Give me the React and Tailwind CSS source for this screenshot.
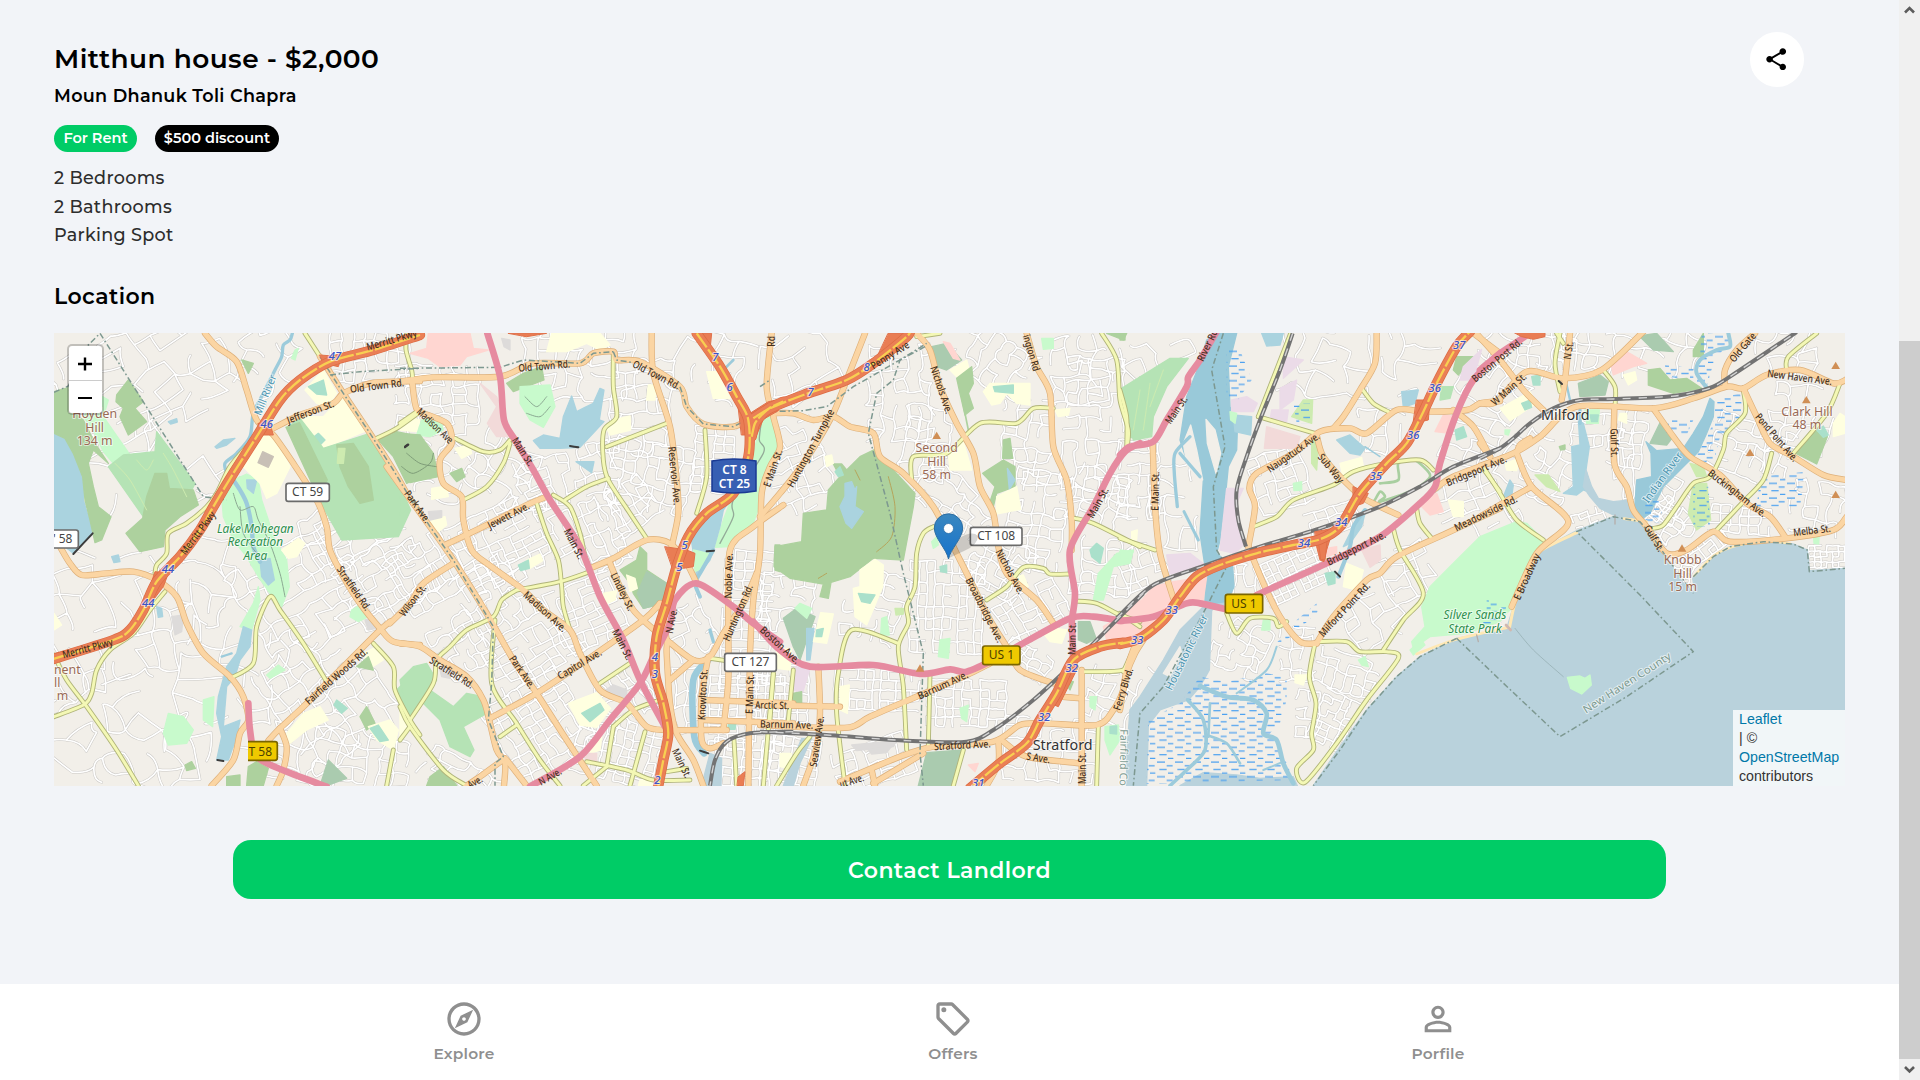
import React from "react";
import { MdShare, MdOutlineExplore, MdOutlineLocalOffer } from "react-icons/md";

/* ---------- Map helpers ---------- */

const parse = (s) => s.trim().split(/\s+/).map((p) => p.split(",").map(Number));

// Catmull-Rom spline through the points of a road.
function curve(s) {
  const p = parse(s);
  let d = `M${p[0]}`;
  for (let i = 0; i < p.length - 1; i++) {
    const a = p[i - 1] || p[i];
    const b = p[i];
    const c = p[i + 1];
    const e = p[i + 2] || c;
    d += `C${b[0] + (c[0] - a[0]) / 7},${b[1] + (c[1] - a[1]) / 7} ${c[0] - (e[0] - b[0]) / 7},${c[1] - (e[1] - b[1]) / 7} ${c}`;
  }
  return d;
}

// Irregular street lattice: [cx, cy, width, height, angle, spacingX, spacingY, irregularity]
function lattice([cx, cy, w, h, ang, spx, spy, jit]) {
  const sx = spx * 0.82;
  const sy = spy * 0.82;
  let seed = Math.round(cx * 7 + cy * 13 + w) || 1;
  const rnd = () => {
    seed = (seed * 16807) % 2147483647;
    return seed / 2147483647;
  };
  rnd();
  const nx = Math.round(w / sx);
  const ny = Math.round(h / sy);
  const a = (ang * Math.PI) / 180;
  const pts = [];
  for (let j = 0; j <= ny; j++) {
    const row = [];
    for (let i = 0; i <= nx; i++) {
      const x = (i - nx / 2) * sx + (rnd() - 0.5) * jit * sx;
      const y = (j - ny / 2) * sy + (rnd() - 0.5) * jit * sy;
      row.push([
        Math.round(cx + x * Math.cos(a) - y * Math.sin(a)),
        Math.round(cy + x * Math.sin(a) + y * Math.cos(a)),
      ]);
    }
    pts.push(row);
  }
  const skip = 0.1 + jit * 0.55;
  let d = "";
  for (let j = 0; j <= ny; j++)
    for (let i = 0; i <= nx; i++) {
      const p = pts[j][i];
      if (i < nx && rnd() > skip) {
        const q = pts[j][i + 1];
        const b = (rnd() - 0.5) * jit * 50;
        d += `M${p}Q${(p[0] + q[0]) / 2 + b},${(p[1] + q[1]) / 2 - b} ${q}`;
      }
      if (j < ny && rnd() > skip) {
        const q = pts[j + 1][i];
        const b = (rnd() - 0.5) * jit * 50;
        d += `M${p}Q${(p[0] + q[0]) / 2 + b},${(p[1] + q[1]) / 2 + b} ${q}`;
      }
    }
  return d;
}

const FILL = {
  wood: "#add19e",
  golf: "#b5e3b5",
  park: "#c8facc",
  school: "#ffffe0",
  cem: "#aacbaf",
  retail: "#ffd6d1",
  com: "#f2dad9",
  ind: "#ebdbe8",
  water: "#aad3df",
  river: "#99c9d9",
  sea: "#b9d2dc",
  land: "#f2efe9",
  meadow: "#cdebb0",
  grey: "#dddbda",
  pitch: "#aae0cb",
  building: "#c8c0b6",
};

/* Map sections, each drawn in its own coordinates at three units per pixel. */
const SECTIONS = [
  {
    x: 40,
    grids: [
      [280, 180, 560, 300, -25, 70, 60, 0.6], [420, 420, 260, 260, -30, 80, 70, 0.7], [240, 900, 420, 320, -15, 75, 70, 0.7],
      [230, 1260, 420, 320, 60, 75, 70, 0.7], [790, 820, 330, 380, 60, 48, 55, 0.35], [930, 640, 220, 260, 62, 50, 45, 0.4],
      [860, 1130, 360, 300, 55, 55, 48, 0.4], [990, 110, 220, 160, 0, 40, 36, 0.35], [1040, 780, 200, 260, 58, 42, 40, 0.3],
      [560, 1120, 280, 420, 10, 70, 70, 0.7], [680, 120, 220, 180, 40, 60, 60, 0.7], [900, 1320, 420, 180, 10, 50, 42, 0.4],
      [120, 560, 160, 260, 20, 90, 80, 0.8], [500, 780, 200, 250, 20, 70, 60, 0.7],
    ],
    areas: [
      ["water", "42,340 75,355 100,400 130,480 130,540 160,640 100,700 75,680 42,640"],
      ["wood", "42,215 84,203 84,280 110,285 130,300 165,370 205,430 160,390 145,430 160,500 175,560 213,590 185,660 165,668 150,600 135,540 128,470 100,400 75,355 42,340"],
      ["wood", "230,225 265,180 310,245 285,265 320,305 265,345 240,290 250,265 228,245"],
      ["park", "130,290 180,225 205,240 190,290 270,405 220,430 190,395 160,330"],
      ["golf", "205,440 250,405 345,395 350,335 465,490 450,520 410,580 310,590"],
      ["wood", "345,460 380,460 388,505 460,510 475,555 420,590 375,630 370,680 300,695 258,640 308,595 320,530"],
      ["wood", "605,120 640,130 625,160"],
      ["park", "775,85 765,120 755,115 765,90"],
      ["park", "545,530 580,480 620,462 655,480 665,540 685,600 700,650 740,720 748,800 725,860 690,820 655,770 620,710 580,660 550,590"],
      ["water", "660,720 690,715 703,780 685,795 665,770"],
      ["water", "620,480 650,480 640,520 622,505"],
      ["park", "655,800 660,840 635,930 600,920 640,850"],
      ["water", "610,920 635,930 630,980 600,1020 585,1070 560,1100 555,1160 550,1220 600,1200 590,1250 565,1320 530,1320 545,1250 530,1180 535,1130 560,1040 590,1000"],
      ["water", "525,380 550,360 585,355 560,375 530,385"],
      ["water", "215,710 235,705 240,725 222,728"],
      ["water", "350,860 365,865 368,890 355,892"],
      ["water", "385,305 410,296 412,306 392,312"],
      ["school", "675,340 700,350 750,440 710,520 680,535 660,490 610,440"],
      ["building", "668,395 700,410 685,442 654,428"],
      ["school", "780,290 850,290 910,225 985,330 850,385"],
      ["school", "795,210 850,150 890,220 860,260 830,250"],
      ["pitch", "805,200 850,180 860,225 830,222"],
      ["pitch", "835,340 855,360 840,375 822,350"],
      ["golf", "745,320 780,295 850,385 990,340 1060,455 1112,570 1075,650 905,660 860,580 830,520"],
      ["wood", "738,322 778,308 862,480 830,522"],
      ["wood", "890,375 940,370 985,440 1000,540 960,550 925,500 900,440"],
      ["wood", "1015,360 1070,335 1140,350 1140,470 1100,490 1060,410"],
      ["meadow", "895,385 915,385 910,430 892,430"],
      ["school", "725,690 775,655 795,670 770,710 745,715"],
      ["grey", "395,890 430,885 425,935 405,945"],
      ["park", "370,1240 385,1180 430,1190 460,1230 440,1270 385,1275"],
      ["park", "490,1140 522,1130 518,1220 490,1200"],
      ["wood", "435,1335 455,1325 466,1345 440,1352"],
      ["wood", "625,1340 650,1325 685,1345 670,1397 620,1397"],
      ["wood", "560,1370 600,1365 600,1397 560,1397"],
      ["park", "680,1065 715,1035 735,1050 690,1075"],
      ["park", "935,870 960,855 985,890 955,905 930,890"],
      ["school", "970,1000 1010,980 1030,1020 990,1045"],
      ["wood", "950,1040 985,1010 1000,1050"],
      ["school", "740,1240 790,1180 840,1160 865,1200 800,1230 750,1270"],
      ["pitch", "890,1140 922,1165 905,1180 882,1155"],
      ["cem", "865,1320 920,1375 860,1397 840,1397"],
      ["wood", "960,1190 980,1160 1005,1210 980,1230"],
      ["school", "985,1220 1050,1200 1075,1230 1060,1290 1010,1260"],
      ["pitch", "990,1225 1015,1215 1045,1260 1020,1265"],
      ["school", "42,880 65,915 42,930"],
      ["golf", "1070,1110 1140,1040 1140,1120 1110,1190"],
      ["grey", "975,900 1005,895 1010,925 985,930"],
    ],
    streams: [
      ["757,40 750,60 730,75 725,110 705,150 670,220 640,280 630,350 590,400 555,430 560,460", 10],
      ["580,480 600,510 620,550 635,620 640,680 660,725", 13],
      ["545,1010 575,1000", 7],
      ["225,430 270,480 320,570", 3, "#cdebb0"], ["290,420 320,450 340,420", 3, "#cdebb0"], ["370,400 400,450 440,530", 3, "#cdebb0"],
      ["580,520 600,570 640,560 655,600 690,670 720,760 735,830", 3, "#8ba892"], ["600,560 610,640 650,700", 3, "#8ba892"],
    ],
    tertiary: [
      "42,1190 130,1155 155,1120 170,1050 210,990 280,940 330,870 375,815",
      "42,1005 80,1080 140,1160 230,1290 295,1397",
      "345,760 350,735 380,700 385,640 440,610 500,560 530,520 570,440 620,380",
      "570,1075 640,1030 650,920 690,830 720,870 790,970 860,1085",
      "1000,970 1060,1040 1065,1110 1110,1200 1140,1245",
      "1010,355 1070,325 1140,275", "795,40 840,110",
      "1060,1290 1040,1397",
    ],
    secondary: [
      "495,40 530,80 590,125 620,210 650,300 700,345 760,430 830,540 860,620 870,690 910,770 960,850 1020,925 1060,965 1140,975",
      "690,330 780,285 880,250 910,220 990,190 1060,185 1140,183",
      "60,680 90,730 125,765 200,760 280,755 350,780 410,830 440,910 490,1000 570,1070 610,1130 625,1200 600,1240 580,1320 515,1397",
      "1050,905 1020,930 960,990 860,1090 790,1160 720,1225 685,1262",
      "720,1225 740,1280 730,1350 710,1397",
      "840,110 910,220 990,340 1060,450 1100,520",
    ],
    primary: ["625,1150 630,1230 650,1310 740,1355 860,1400"],
    motorway: ["30,1020 220,960 270,930 310,870 350,785 420,710 480,630 520,560 580,460 650,350 720,240 780,180 870,125 1000,90 1140,45"],
    junctions: ["335,785 345,755 385,760 370,800 340,840 325,810", "840,105 905,110 895,140 850,130", "655,310 690,310 700,345 660,345"],
    rail: [],
    borders: [
      "42,217 85,198 140,80 180,40 300,230 490,530 560,540",
      "840,110 910,220 990,340 1060,450 1120,550",
      "870,165 960,155 1140,145",
    ],
    blocks: ["100,702 158,640", "532,1320 550,1323", "1095,380 1103,374"],
    labels: [
      ["Merritt Pkwy", 68, 1005, 218, 965], ["Merritt Pkwy", 428, 700, 520, 578], ["Merritt Pkwy", 980, 82, 1130, 38],
      ["Jefferson St.", 742, 302, 880, 250], ["Old Town Rd.", 930, 208, 1092, 188], ["Stratfield Rd.", 898, 742, 985, 868],
      ["Fairfield Woods Rd.", 800, 1148, 978, 990],
    ],
    texts: [
      ["Hoyden", 164, 282, "hill"], ["Hill", 164, 322, "hill"], ["134 m", 164, 362, "hill"],
      ["nent", 42, 1048, "hill", "start"], ["ll", 42, 1087, "hill", "start"], ["m", 50, 1128, "hill", "start"],
      ["Lake Mohegan", 646, 626, "park"], ["Recreation", 646, 667, "park"], ["Area", 646, 707, "park"],
      ["47", 885, 108, "exit"], ["46", 680, 311, "exit"], ["44", 384, 747, "exit"], ["44", 325, 848, "exit"],
    ],
    waterLabels: [["Mill River", 652, 285, 700, 165]],
    shields: [["CT 59", 738, 490, 130, 54, "ct"], ["' 58", 0, 630, 115, 54, "ct"]],
    peaks: [],
  },
  {
    x: 400,
    grids: [
      [110, 240, 240, 200, 0, 42, 36, 0.4], [540, 130, 320, 200, 0, 50, 44, 0.5], [720, 260, 180, 280, 5, 42, 50, 0.4],
      [500, 470, 300, 140, -15, 40, 36, 0.4], [750, 470, 240, 200, 12, 42, 40, 0.35], [930, 140, 200, 220, 20, 60, 60, 0.7],
      [940, 420, 110, 200, 5, 36, 30, 0.25], [330, 660, 340, 230, -25, 40, 30, 0.25], [290, 830, 220, 200, 58, 44, 36, 0.3],
      [600, 640, 200, 160, 65, 42, 34, 0.3], [560, 880, 220, 200, -22, 42, 30, 0.25], [400, 1000, 260, 150, -30, 42, 34, 0.25],
      [180, 980, 180, 160, 58, 40, 36, 0.3], [420, 1220, 260, 260, 58, 36, 40, 0.2], [650, 1290, 260, 180, 15, 34, 32, 0.2],
      [680, 1130, 140, 150, 55, 36, 34, 0.3], [1040, 900, 160, 420, 3, 36, 36, 0.2], [1040, 1180, 220, 220, 1, 34, 30, 0.15],
      [1040, 1330, 200, 150, 4, 34, 34, 0.2], [860, 1140, 90, 220, 0, 44, 50, 0.5], [80, 760, 180, 200, 58, 46, 40, 0.3],
      [110, 440, 180, 170, 20, 50, 46, 0.5], [310, 450, 200, 200, 30, 55, 55, 0.6], [180, 1370, 240, 100, 30, 48, 40, 0.4],
      [870, 930, 150, 130, 60, 46, 40, 0.4], [690, 560, 130, 160, 55, 40, 36, 0.3],
    ],
    areas: [
      ["retail", "85,40 210,40 220,85 265,90 200,110 180,135 120,140 85,115 30,100 80,85"],
      ["com", "240,190 290,230 340,350 290,350 262,310 290,260"],
      ["wood", "320,190 370,160 425,140 432,180 340,215"],
      ["park", "360,200 450,195 465,260 430,322 390,300 360,250"],
      ["water", "400,362 430,345 480,355 490,290 515,228 530,275 555,262 580,250 600,205 612,210 598,300 612,305 570,350 540,382 480,385 420,385"],
      ["water", "528,425 582,425 575,458"],
      ["school", "455,40 600,40 630,75 600,90 560,70 500,95 440,95"],
      ["school", "640,300 690,288 692,330 630,345 622,330"],
      ["school", "745,195 768,195 765,240 740,240"],
      ["school", "920,155 950,155 990,235 940,235"],
      ["school", "20,290 60,300 50,335 0,330"],
      ["park", "65,300 120,290 130,330 90,350 50,345"],
      ["pitch", "25,350 60,345 55,370 25,375"],
      ["wood", "0,340 60,345 100,400 115,470 30,488 0,430"],
      ["wood", "150,460 185,445 195,470 170,485"],
      ["school", "95,505 140,498 145,530 95,538"],
      ["school", "80,600 135,590 140,615 115,635"],
      ["golf", "0,520 25,560 0,585"],
      ["school", "165,385 210,375 215,400 185,415"],
      ["park", "1108,290 1140,350 1090,520 1060,610 990,680 945,682 970,600 1000,520 1060,400 1080,320"],
      ["water", "995,535 970,570 960,620 940,690 930,720 890,770 875,665 910,600"],
      ["park", "880,690 925,700 915,740 885,755"],
      ["wood", "660,750 710,720 720,680 740,700 740,750 800,790 790,850 730,865 700,820 690,790"],
      ["cem", "740,755 800,790 790,850 730,865 712,820"],
      ["school", "680,765 705,775 712,805 690,815"],
      ["school", "610,820 650,812 645,840 612,855"],
      ["school", "380,720 420,702 428,722 390,745"],
      ["pitch", "355,735 385,720 388,745 362,752"],
      ["golf", "0,1080 40,1040 80,1030 110,1080 90,1110 160,1160 200,1120 250,1130 260,1180 190,1220 222,1290 210,1310 150,1280 120,1200 70,1150 20,1190"],
      ["school", "505,1150 590,1118 632,1165 590,1222 540,1215"],
      ["pitch", "545,1180 600,1150 612,1170 570,1205"],
      ["school", "0,1170 25,1215 0,1260"],
      ["wood", "90,1370 130,1340 170,1397 80,1397"],
      ["grey", "600,1120 640,1095 680,1110 680,1150 650,1140"],
      ["grey", "120,1050 150,1040 150,1075 125,1070"],
      ["grey", "305,55 330,60 330,90 312,80"],
      ["grey", "85,575 125,572 125,592 90,600"],
      ["school", "580,1260 605,1250 600,1290 570,1300"],
      ["com", "560,1300 590,1300 590,1325 555,1320"],
      ["sea", "930,1300 965,1315 963,1397 905,1397"],
      ["wood", "1125,675 1140,675 1140,755 1125,750"],
      ["pitch", "985,1212 1008,1212 1005,1228 983,1228"],
      ["school", "720,1380 760,1385 755,1397 715,1397"],
    ],
    streams: [
      ["925,1020 880,1080 883,1250 912,1300", 20],
      ["940,690 900,760 885,790 900,830", 12], ["1000,120 975,145", 8], ["930,930 940,965", 10],
      ["375,230 410,260 440,230", 3, "#8ba892"], ["380,280 420,290 450,260", 3, "#8ba892"],
      ["5,440 40,460 90,430 100,400", 3, "#7d9c77"], ["20,400 60,430 110,440", 3, "#7d9c77"],
      ["1085,300 1078,360 1090,400 1000,540 1000,590 960,670", 4, "#93ab98"],
    ],
    tertiary: [
      "20,40 18,90 35,150 38,180", "640,100 640,200 650,290 612,330 610,420 625,480 690,580 740,655", "620,380 800,310",
      "495,540 560,500 625,475", "460,525 510,560 540,640 555,710", "410,550 440,640 475,720 485,800 490,860 510,930",
      "350,810 480,785 570,755", "350,810 305,840 280,890 200,930 150,980 110,1020 100,1090 30,1200",
      "165,355 250,395 300,390 330,360", "330,370 310,430 260,500 190,540", "915,330 920,470 890,580",
      "285,900 275,1090 350,1210 420,1320 480,1397", "0,1160 30,1220 130,1350 200,1397", "300,1250 350,1215",
      "600,1090 690,1030", "560,1325 680,1350 760,1380 870,1380", "735,1235 690,1397", "640,1220 620,1340",
      "780,1140 700,1170 640,1220", "550,1397 620,1340", "1002,1260 1010,1397", "1120,1060 1090,1397",
      "930,1015 1000,1025", "0,310 50,275", "30,1220 0,1260", "800,1355 860,1345",
    ],
    secondary: [
      "0,185 100,172 300,170 400,130 540,130 580,100 640,95 650,120 720,125 840,200 860,260 910,312 1000,320 1060,290 1110,260",
      "36,180 45,250 60,275 140,310 155,370 120,420 130,490 185,530 190,600 215,690 260,730 370,810 430,870 510,930 540,1000 600,1110 680,1150 740,1220 800,1230 900,1230 980,1230",
      "-40,440 10,510 90,620 160,720 260,880 340,1020 410,1120 500,1260 590,1397",
      "135,675 240,625 380,555 440,530", "-30,910 30,850 70,790 160,730",
      "0,970 60,980 120,1020 200,1070 250,1140 270,1210 290,1290 315,1330 312,1397", "270,1195 410,1120 560,1020 730,900 780,850",
      "570,745 640,715 740,660 810,670 860,730 890,790", "755,40 760,160 810,320 830,480 835,580 815,680",
      "630,730 660,800 700,870 740,910 800,960 880,1020 930,1010 970,940 1030,850 1070,760",
      "1115,40 1100,200 1120,290 1140,380 1110,440 1085,520 1080,700 1060,840 1050,1000 1045,1397",
      "1150,555 1060,620 990,690 985,900 985,1080 970,1230", "780,850 800,960 800,1000 810,1150 830,1240 880,1320 910,1397",
      "810,1080 880,1020", "910,1140 1180,1150", "910,1200 1180,1210", "925,1010 905,1130 905,1260 930,1285 970,1270",
      "315,1315 240,1370 200,1397", "320,1320 380,1397",
    ],
    primary: [
      "262,40 300,170 312,300 345,360 400,450 450,540 540,680 600,830 670,960 720,1080 795,1220",
      "390,1400 540,1310 630,1200 720,1090 760,1010 810,910 825,840 890,790 1000,860 1060,910 1140,965",
    ],
    motorway: [
      "890,40 960,140 1010,230 1045,300 1045,410 1000,520 920,580 865,650 830,740 800,850 770,950 765,1060 790,1150 805,1240 790,1320 775,1397",
      "1055,350 1065,310 1085,285 1110,263 1150,245",
    ],
    junctions: ["905,40 935,40 930,90", "1015,260 1050,280 1105,245 1130,240 1135,272 1090,298 1070,345 1025,345", "795,680 860,690 885,700 880,740 850,745 820,750", "1015,1370 1035,1355 1030,1397 1012,1397", "325,40 440,40 380,50"],
    rail: ["1180,1235 1050,1240 980,1265 945,1320 930,1397"],
    borders: ["0,145 300,142 370,120 540,130 580,100 640,95", "640,95 650,120 700,128", "840,200 860,260 910,312 1000,320 1060,290 1110,262", "40,540 90,620 160,720 280,920 275,1090 265,1200 310,1310 285,1330 285,1397"],
    blocks: ["510,378 535,382", "900,1292 925,1300", "920,694 942,692", "15,382 25,374"],
    labels: [
      ["Old Town Rd.", 355, 145, 510, 132], ["Old Town Rd.", 700, 130, 838, 200], ["Madison Ave", 55, 270, 155, 365],
      ["Main St.", 343, 355, 395, 435], ["Main St.", 500, 628, 545, 715], ["Main St.", 645, 930, 690, 1018],
      ["Jewett Ave.", 265, 618, 386, 556], ["Reservoir Ave.", 815, 380, 832, 555], ["Park Ave.", 20, 515, 85, 605],
      ["Wilson St.", 5, 885, 72, 798], ["Madison Ave.", 375, 820, 495, 930], ["Lindley St.", 640, 760, 695, 870],
      ["Park Ave.", 335, 1010, 398, 1102], ["Stratfield Rd.", 92, 1018, 218, 1098], ["Capitol Ave.", 475, 1070, 602, 995],
      ["N Ave.", 808, 940, 822, 865], ["N Ave.", 418, 1388, 482, 1352], ["Noble Ave.", 985, 835, 988, 700],
      ["Huntington Rd.", 978, 962, 1050, 795], ["E Main St.", 1100, 500, 1138, 390], ["Knowlton St.", 905, 1200, 912, 1048],
      ["E Main St.", 1048, 1182, 1052, 1062], ["Main St.", 825, 1288, 865, 1372], ["Ave.", 205, 1397, 245, 1375],
      ["Rd", 1114, 80, 1114, 48],
    ],
    texts: [["7", 946, 111, "exit"], ["6", 989, 200, "exit"], ["5", 854, 676, "exit"], ["5", 838, 740, "exit"], ["4", 765, 1010, "exit"], ["3", 765, 1062, "exit"], ["2", 772, 1380, "exit"]],
    waterLabels: [],
    shields: [["CT 127", 974, 1000, 155, 54, "ct"]],
    peaks: [],
  },
  {
    x: 760,
    grids: [
      [140, 140, 240, 200, -20, 60, 55, 0.7], [420, 220, 180, 280, 0, 46, 44, 0.5], [700, 120, 220, 160, 30, 46, 44, 0.5],
      [110, 440, 180, 260, -20, 42, 40, 0.45], [500, 370, 130, 200, 10, 42, 42, 0.4], [800, 370, 160, 260, 5, 44, 44, 0.45],
      [1000, 330, 160, 440, 3, 42, 44, 0.4], [580, 540, 220, 140, 40, 40, 38, 0.4], [830, 600, 170, 300, 10, 40, 40, 0.35],
      [560, 860, 220, 260, 2, 30, 42, 0.2], [720, 740, 180, 160, 30, 36, 34, 0.3], [340, 860, 180, 200, 15, 40, 42, 0.4],
      [80, 850, 160, 180, 5, 42, 42, 0.45], [350, 1110, 260, 110, 2, 28, 36, 0.15], [620, 1150, 240, 150, 2, 32, 34, 0.2],
      [60, 1120, 160, 160, 2, 34, 34, 0.2], [820, 880, 200, 140, -28, 36, 34, 0.3], [1020, 740, 180, 180, 5, 44, 40, 0.4],
      [1030, 540, 180, 160, 20, 44, 40, 0.4], [870, 1290, 260, 180, 5, 42, 38, 0.35], [340, 1330, 240, 120, -20, 40, 38, 0.3],
      [90, 1320, 160, 150, 10, 34, 34, 0.2], [1050, 1130, 140, 150, 20, 44, 44, 0.4], [800, 1020, 160, 90, 30, 36, 32, 0.3],
      [960, 150, 160, 200, 0, 50, 48, 0.5],
    ],
    areas: [
      ["park", "0,300 25,285 40,300 55,400 0,500"],
      ["wood", "220,432 245,432 260,450 300,410 345,388 360,420 400,450 465,520 460,560 430,720 340,715 270,770 213,787 205,835 180,830 190,792 90,775 42,740 45,680 125,665 130,580 200,570 205,510 240,470"],
      ["water", "255,490 275,485 285,510 290,500 285,560 310,575 275,625 258,610 240,560 255,530"],
      ["pitch", "225,455 240,440 250,465 235,470"],
      ["school", "195,410 215,405 220,430 200,440"],
      ["school", "300,750 345,718 370,735 368,800 320,915 285,890 280,805 300,800"],
      ["pitch", "295,820 345,825 330,850 305,845"],
      ["cem", "515,80 560,70 605,120 560,150 530,140"],
      ["retail", "550,65 570,70 600,120 580,115"],
      ["school", "570,150 620,120 628,150 590,170"],
      ["wood", "590,175 635,140 640,190 625,220 640,265 615,285 600,220"],
      ["school", "670,215 690,190 810,190 810,255 770,250 740,220 720,250 695,255"],
      ["pitch", "700,200 760,195 760,220 705,215"],
      ["park", "845,55 880,55 880,85 850,88"],
      ["wood", "730,360 750,355 758,415 728,415"],
      ["wood", "668,460 730,420 765,440 765,500 710,520 700,560 690,545 705,500"],
      ["water", "742,445 765,480 748,508"],
      ["school", "710,530 770,500 782,568 708,582"],
      ["school", "565,400 610,365 635,450 570,450"],
      ["school", "885,270 930,265 925,285 895,290"],
      ["golf", "1085,225 1140,170 1140,360 1105,350"],
      ["wood", "1040,40 1100,40 1090,60"],
      ["pitch", "990,690 1010,670 1030,685 1020,730 995,710"],
      ["park", "1015,760 1070,700 1120,690 1110,730 1060,740 1030,840 1000,840"],
      ["park", "515,665 530,650 535,675 520,685"],
      ["pitch", "540,740 560,735 560,758 542,755"],
      ["cem", "70,895 110,865 165,890 140,960 120,1020 100,980"],
      ["park", "105,865 120,850 155,865 140,895"],
      ["water", "140,925 162,925 150,1020 140,1020"],
      ["ind", "105,1040 150,1045 128,1118 100,1110"],
      ["school", "182,878 220,882 200,970 160,965"],
      ["pitch", "170,930 190,925 185,950 168,950"],
      ["school", "50,990 95,985 90,1050 50,1045"],
      ["school", "240,1100 268,1095 262,1180 240,1170"],
      ["park", "365,895 380,890 388,945 362,945"],
      ["meadow", "405,865 430,865 430,882 408,885"],
      ["park", "540,960 570,955 565,1015 535,1010"],
      ["park", "600,1165 625,1155 620,1205 605,1195"],
      ["cem", "500,1298 608,1290 575,1397 475,1397"],
      ["school", "850,940 890,925 920,930 905,970 870,965"],
      ["school", "770,770 790,765 805,800 780,805"],
      ["retail", "1030,920 1080,890 1140,840 1140,950 1040,960"],
      ["cem", "955,905 990,905 1008,955 980,970 955,960"],
      ["wood", "100,1120 125,1115 125,1150 100,1150"],
      ["sea", "125,1255 155,1255 120,1330 100,1397 70,1397"],
      ["school", "60,1300 95,1300 85,1345 60,1340"],
      ["park", "1035,1220 1075,1215 1080,1260 1050,1305 1035,1260"],
      ["pitch", "1050,1220 1070,1218 1070,1242 1050,1240"],
      ["park", "990,1130 1010,1130 1005,1170 990,1160"],
      ["retail", "625,1335 655,1330 645,1355"],
      ["wood", "910,1080 940,1085 930,1110"],
      ["grey", "275,1275 410,1262 400,1280 290,1292"],
      ["grey", "325,1290 395,1278 380,1298 335,1302"],
    ],
    streams: [
      ["605,230 625,330", 5, "#add19e"], ["285,450 300,480", 3, "#b5a45a"], ["385,470 405,560 395,650 350,695", 3, "#b5a45a"], ["175,775 200,760", 3, "#b5a45a"],
    ],
    tertiary: [
      "455,480 460,410 560,400 660,310 770,310 820,265 880,265", "1025,40 1070,120 1080,240 1105,330 1100,390",
      "520,620 490,640 470,700 465,800 440,860 445,910 415,980 430,1100 440,1290", "415,970 275,930 235,1060 230,1180 255,1397",
      "680,840 740,800 790,742 850,745 870,762 930,762", "945,595 1000,610 1140,680", "945,843 1010,850 1080,885 1140,905",
      "510,1065 505,1280", "40,1060 30,1200", "100,1050 85,1200", "50,1397 110,1300 150,1250", "580,1397 610,1290",
      "970,1055 1090,1050 1125,1000", "1015,1220 1010,1397", "470,50 540,40",
    ],
    secondary: [
      "315,40 260,180 215,290 130,430 60,520 0,590",
      "35,280 100,280 160,300 220,290 270,320 340,340 360,410 430,460 520,560 590,700 640,800 690,900 740,980 780,1050 880,1090",
      "470,40 510,90 540,200 590,310 640,400 660,500 700,580 715,680 740,760 830,840 880,910",
      "800,40 830,140 870,220 880,380 920,480 935,600 935,690", "0,1155 240,1160",
      "0,1215 140,1222 270,1222 330,1190 470,1130 620,1065 690,1030", "175,1040 180,1180 170,1280 130,1397",
      "240,1385 420,1310 520,1280 700,1265 780,1215 850,1210 1010,1215 1060,1170 1090,1110 1100,1060 1125,1000 1150,960",
      "340,1390 490,1300", "335,1350 345,1397", "715,1260 715,1330 680,1397", "730,1265 800,1310 960,1330", "965,1050 965,1397", "900,1130 965,1135",
    ],
    primary: [
      "-20,905 60,990 150,1040 340,1035 480,1062 570,1048 620,1055 720,1010 780,975 930,895 1000,890 1085,903",
      "935,900 945,820 930,690 1000,560 1050,460 1095,395 1140,370", "935,895 940,1020",
    ],
    motorway: ["-20,295 30,265 130,225 260,180 340,130 440,50 450,30", "630,1405 720,1330 800,1270 840,1200 890,1120 940,1020 1020,980 1090,968"],
    junctions: ["385,40 460,40 400,100 340,135", "940,1005 955,1040 925,1100 895,1160 870,1150 900,1080"],
    rail: ["1150,820 1060,910 950,1020 820,1140 700,1230 620,1265 440,1262 200,1245 0,1235"],
    borders: ["495,80 420,120 400,180 350,220 325,340 390,580 430,760 490,1000 480,1300 490,1397", "20,275 130,272 200,260 280,200 420,120 500,70", "0,200 30,180"],
    blocks: [],
    labels: [
      ["Penny Ave", 335, 140, 445, 72], ["Nichols Ave.", 520, 140, 568, 280], ["Huntington Turnpike", 90, 500, 215, 270],
      ["Nichols Ave.", 715, 690, 785, 820], ["Broadbridge Ave.", 625, 775, 722, 965],
      ["Main St.", 990, 592, 1038, 505], ["Main St.", 935, 1005, 938, 908], ["Boston Ave.", 5, 925, 115, 1025],
      ["Barnum Ave.", 475, 1130, 622, 1062], ["Arctic St.", -15, 1155, 88, 1157], ["Barnum Ave.", 0, 1212, 160, 1216],
      ["Seaview Ave.", 160, 1340, 182, 1188], ["Stratford Ave.", 522, 1280, 692, 1272], ["S Ave.", 800, 1308, 870, 1320],
      ["Ferry Blvd.", 1070, 1170, 1110, 1045], ["Main St.", 967, 1392, 967, 1298], ["ington Rd", 798, 45, 830, 152],
      ["ut Ave.", 240, 1394, 310, 1372],
    ],
    texts: [
      ["8", 320, 142, "exit"], ["7", 152, 217, "exit"], ["32", 935, 1043, "exit"], ["32", 853, 1190, "exit"], ["31", 655, 1388, "exit"],
      ["Second", 530, 384, "hill"], ["Hill", 530, 424, "hill"], ["58 m", 530, 465, "hill"], ["Stratford", 908, 1275, "town"],
    ],
    waterLabels: [["Fairfield Co", 1092, 1228, 1090, 1397, "#7d9b90"]],
    shields: [["CT 108", 631, 622, 155, 54, "ct"], ["US 1", 668, 978, 112, 56, "us"]],
    peaks: [[530, 347], [480, 1045]],
  },
  {
    x: 1120,
    grids: [
      [110, 100, 200, 110, -25, 60, 60, 0.7], [55, 480, 110, 220, 0, 38, 40, 0.35], [170, 560, 120, 240, 5, 56, 60, 0.6],
      [70, 740, 140, 120, -20, 40, 40, 0.4], [610, 120, 260, 200, 10, 64, 60, 0.65], [870, 120, 160, 200, 5, 60, 60, 0.6],
      [480, 480, 160, 170, -18, 40, 36, 0.3], [520, 760, 200, 130, -25, 28, 26, 0.1], [640, 600, 150, 90, -20, 36, 34, 0.3],
      [360, 980, 170, 170, 25, 38, 38, 0.35], [530, 1000, 100, 160, 2, 40, 40, 0.35], [680, 1060, 180, 120, 20, 38, 34, 0.3],
      [640, 1200, 120, 160, 25, 34, 24, 0.2], [760, 900, 180, 160, -30, 52, 46, 0.5], [860, 760, 150, 140, -25, 46, 44, 0.4],
      [1060, 360, 160, 160, 20, 48, 46, 0.4], [1040, 530, 180, 120, -20, 46, 42, 0.4], [360, 800, 100, 120, 0, 40, 40, 0.4],
      [780, 330, 120, 120, 10, 55, 50, 0.6], [180, 1000, 120, 200, 30, 60, 70, 0.7], [560, 1180, 80, 140, 5, 40, 34, 0.3],
    ],
    areas: [
      ["golf", "5,205 150,115 205,115 140,200 100,290 95,350 40,360"],
      ["river", "260,60 290,40 350,40 325,140 330,260 352,330 350,390 325,440 315,540 300,660 290,700 338,740 342,800 320,850 275,870 255,850 255,740 240,640 250,480 200,420 180,360 200,230 240,130"],
      ["sea", "340,845 275,870 268,1050 240,1100 205,1140 120,1170 85,1215 80,1397 20,1397 20,1300 30,1170 60,1130 130,1020 180,930 250,860"],
      ["land", "212,315 230,390 248,480 225,470 200,430 190,370"],
      ["land", "258,298 285,330 302,400 288,460 262,370"],
      ["land", "130,1060 180,980 185,1000 150,1070"],
      ["ind", "490,110 550,120 490,175"], ["ind", "480,205 530,180 520,240 480,270"], ["ind", "455,270 505,270 500,305 450,300"],
      ["ind", "335,240 380,230 412,250 400,275 335,275"], ["ind", "320,505 370,505 345,560 375,670 345,700 300,690"],
      ["ind", "140,705 210,700 255,735 150,762"], ["com", "440,320 540,350 530,385 433,385"],
      ["retail", "0,905 40,870 100,800 160,785 260,770 250,840 150,870 60,940 0,955"],
      ["retail", "970,285 1010,290 990,340 945,335"], ["retail", "895,550 950,520 970,575 930,585"],
      ["retail", "620,685 650,680 650,700 620,710"],
      ["school", "680,730 730,750 715,812 670,800"], ["com", "725,690 780,675 782,720 750,742"],
      ["school", "660,430 725,412 730,440 670,475"],
      ["school", "985,540 1030,545 1030,590 1000,590"], ["school", "525,1065 560,1065 550,1095 525,1088"],
      ["wood", "1010,110 1060,110 1015,165 1000,150"], ["ind", "1030,140 1085,88 1060,180 1020,180"],
      ["golf", "965,200 1000,200 990,235 960,240"], ["pitch", "1005,330 1030,320 1040,350 1010,360"],
      ["water", "650,360 690,345 735,385 720,405 690,400"], ["water", "845,215 895,210 885,250 850,262"],
      ["water", "425,40 490,40 480,75 440,78"], ["water", "340,285 395,290 392,345 345,335"],
      ["water", "715,585 735,580 725,620 690,670 670,680 690,640"],
      ["park", "330,275 350,280 345,310 332,300"], ["meadow", "515,290 550,240 578,240 575,310 545,300"],
      ["meadow", "575,350 595,380 590,450 575,430"], ["park", "520,490 545,485 545,510 522,512"],
      ["park", "0,690 40,695 20,720 0,720"], ["school", "35,635 52,630 50,660 35,658"],
      ["park", "430,900 450,900 450,930 425,930"], ["pitch", "615,760 645,755 645,790 625,795"],
      ["park", "870,990 905,960 915,975 880,1005"], ["park", "715,1020 735,1010 745,1040 725,1035"],
      ["wood", "0,40 15,40 15,60 0,60"],
      ["sea", "180,1397 250,1358 350,1365 420,1375 520,1370 532,1397"],
    ],
    streams: [
      ["210,350 165,400 163,460 172,560", 10], ["192,575 235,660", 9], ["180,400 240,470", 10],
      ["240,1098 320,1130 400,1140 440,1180 430,1240 470,1260 490,1330 520,1390", 14],
      ["203,1140 250,1200 255,1290 200,1350 150,1397", 11], ["260,1245 320,1270 360,1330", 8], ["270,1150 265,1250", 8],
      ["470,980 440,1050 350,1120", 6], ["735,570 700,620 690,680 655,770", 12], ["490,1325 430,1350", 6], ["735,380 780,410", 4],
      ["740,540 760,545 780,515 795,530 780,545 880,510 930,470 910,440 880,420 835,430 835,480 780,490", 8, "#a9cfa0"],
      ["60,210 40,330", 3, "#cdebb0"], ["90,190 70,330", 3, "#cdebb0"], ["130,150 90,260", 3, "#cdebb0"],
    ],
    marsh: [
      "240,1070 320,1085 440,1060 500,1070 500,1140 480,1210 450,1240 500,1330 520,1380 80,1392 85,1200 180,1150",
      "320,90 360,90 395,180 350,245 320,235", "520,250 570,250 570,310 530,310", "530,900 590,850 600,870 500,960 460,980",
    ],
    tertiary: [
      "0,210 20,290 20,385", "0,655 105,690", "415,290 585,340", "512,40 415,290", "725,205 760,250 805,275",
      "400,620 470,590 520,540 640,495 700,455 800,430 900,420 940,450", "820,625 840,690 910,820 850,900 790,990",
      "590,965 680,965 720,995 800,995 835,1015 740,1140 650,1270 555,1387 530,1345 580,1290 575,1240 588,1150 568,1070 585,970",
      "320,880 350,940 390,895 460,895 475,920 500,905", "890,565 900,610 935,655", "1085,440 1140,515", "60,920 0,880", "10,1055 35,1000",
    ],
    secondary: [
      "590,970 640,890 740,780 780,760 830,710 990,635 1140,565",
      "385,680 405,560 388,505 410,460 520,400 600,335 690,325 740,340 830,270 910,275 1040,270 1080,250 1140,243",
      "385,680 430,790 480,890 540,965 590,970", "770,40 765,130 720,210 670,290 640,325", "590,345 610,410 680,490 740,540 835,585",
      "1000,270 1060,320 1110,410", "98,370 105,560 120,700 160,835", "1060,40 1140,100", "45,975 20,1050 0,1170", "940,510 1000,470 1140,418",
    ],
    primary: [
      "0,405 30,380 100,365 140,300 200,200 205,170 240,120 290,35", "0,903 100,890 200,850 240,850 320,868",
      "410,825 620,730 780,650 900,550 945,500 960,430 1010,280 1060,180 1140,100",
    ],
    motorway: ["0,972 60,955 130,900 180,830 230,770 300,735 410,700 520,675 600,658 660,620 720,520 800,430 860,370 910,275 950,190 1010,80 1050,35"],
    junctions: ["585,635 640,625 620,690 612,725 600,720 590,680", "700,500 745,520 730,550 700,560", "890,240 930,240 925,300 880,310", "595,655 622,655 615,720 603,718"],
    rail: [
      "-10,895 100,795 260,735 420,680 600,625 780,560 900,500 1000,440 1140,385",
      "518,40 480,150 420,300 380,410 350,510 355,600 378,680",
    ],
    borders: ["310,40 275,150 315,380 280,500 290,690 320,740 260,860 130,1100 60,1180 40,1397", "1010,955 900,1010 830,1070 740,1170 660,1290 580,1397"],
    blocks: ["645,755 660,770"],
    labels: [
      ["River Rd", 240, 122, 285, 30], ["Main St.", 143, 308, 195, 232], ["E Main St.", 105, 572, 107, 455],
      ["Naugatuck Ave.", 445, 450, 595, 345], ["Sub Way", 600, 405, 665, 485], ["Bridgeport Ave.", 622, 728, 795, 642],
      ["Milford Point Rd.", 602, 945, 745, 792],
    ],
    texts: [
      ["37", 1018, 76, "exit"], ["36", 944, 205, "exit"], ["36", 880, 346, "exit"], ["35", 767, 467, "exit"], ["34", 664, 605, "exit"],
      ["34", 552, 670, "exit"], ["33", 155, 869, "exit"], ["33", 52, 959, "exit"],
    ],
    waterLabels: [["Housatonic River", 145, 1108, 255, 885]],
    shields: [["US 1", 316, 823, 112, 56, "us"]],
    peaks: [],
  },
  {
    x: 1480,
    grids: [
      [60, 170, 220, 220, 35, 50, 50, 0.4], [200, 80, 180, 120, 5, 42, 40, 0.35], [340, 90, 200, 120, 15, 50, 44, 0.45],
      [180, 440, 200, 170, 30, 44, 42, 0.4], [440, 350, 110, 180, 10, 42, 42, 0.4], [560, 90, 200, 120, 20, 60, 56, 0.6],
      [330, 600, 110, 60, -20, 30, 24, 0.3], [60, 620, 160, 100, -25, 44, 40, 0.4], [600, 560, 130, 130, 30, 42, 42, 0.4],
      [780, 380, 160, 150, 20, 40, 40, 0.35], [780, 600, 180, 90, 5, 36, 32, 0.25], [960, 300, 180, 220, 10, 55, 50, 0.5],
      [920, 100, 220, 120, 10, 60, 56, 0.6], [1010, 560, 160, 160, 10, 46, 46, 0.45], [1040, 710, 100, 60, 0, 22, 20, 0.15],
      [680, 680, 120, 50, -35, 26, 24, 0.2], [610, 750, 50, 80, 20, 22, 22, 0.2], [430, 430, 60, 220, 0, 36, 36, 0.3],
      [560, 600, 100, 120, 40, 40, 34, 0.3], [340, 330, 120, 100, 0, 40, 40, 0.4], [900, 400, 80, 120, 20, 40, 40, 0.4],
    ],
    areas: [
      ["park", "110,605 140,610 190,660 150,740 100,860 80,880 60,905 -40,940 -150,950 -200,985 -205,965 -165,920 -175,860 -150,800 -80,730 0,650"],
      ["sea", "-500,1397 -420,1280 -340,1170 -250,1070 -180,1010 -70,955 80,925 100,860 130,780 180,690 290,632 400,590 480,607 510,640 560,712 610,790 645,820 638,775 700,710 750,680 850,665 940,672 982,690 988,752 1095,745 1095,1397"],
      ["park", "262,1072 300,1068 315,1075 330,1065 334,1095 305,1122 272,1105"],
      ["river", "690,235 702,245 700,290 680,340 655,395 600,450 550,500 510,580 480,600 463,580 470,480 515,470 513,400 498,365 530,392 610,385 640,340 670,290"],
      ["water", "295,300 310,310 328,380 318,450 335,520 310,510 290,525 250,520 280,500 275,380 300,375"],
      ["sea", "318,450 335,500 355,535 400,545 450,540 468,575 480,607 440,600 400,585 360,565 330,530 310,500"],
      ["wood", "505,150 540,145 570,180 620,175 665,205 580,220 505,195"], ["cem", "478,48 530,40 580,95 520,90"],
      ["cem", "295,190 360,165 385,185 375,225 300,230"], ["retail", "390,120 440,95 500,130 460,140 400,165"],
      ["school", "430,165 465,155 470,180 445,195"], ["wood", "1000,330 1042,350 1010,432 948,400"],
      ["wood", "640,90 670,40 670,110 640,110"],
      ["meadow", "640,490 680,490 692,600 650,630 625,580"], ["meadow", "165,465 205,465 240,515 200,500"],
      ["meadow", "630,430 670,440 680,470 650,470"],
      ["cem", "540,308 580,350 560,375 510,370"], ["school", "60,265 150,215 170,250 90,302"],
      ["pitch", "125,250 150,240 155,262 135,270"], ["pitch", "155,170 180,165 180,195 160,195"],
      ["school", "75,430 118,415 110,452 80,450"], ["water", "70,530 90,480 100,495 95,530"],
      ["park", "315,270 358,270 355,310 320,310"], ["pitch", "330,285 355,285 352,305 335,305"],
      ["park", "1000,635 1018,638 1016,672 1002,670"], ["school", "1060,310 1080,280 1095,290 1095,340 1060,350"],
      ["pitch", "1010,330 1030,318 1045,345 1030,352"], ["park", "75,330 90,330 85,345 75,342"],
      ["wood", "238,380 255,375 255,388 242,390"], ["school", "420,280 440,280 440,310 415,300"],
    ],
    streams: [
      ["745,40 750,80 710,90 660,120 650,160 690,215", 12], ["300,270 300,310", 10], ["260,195 270,240", 7],
      ["88,925 110,830 155,735 185,690 290,638", 9, "#ffe8b4"], ["-190,1002 -70,958 85,922", 8, "#ffe8b4"],
      ["432,596 500,605", 8, "#ffe8b4"], ["642,768 700,708 760,680 850,664 930,670", 7, "#ffe8b4"],
      ["405,612 405,585", 4, "#b5aeaa"], ["78,915 92,930", 8, "#d0b8b0"], ["-10,945 -5,965", 4, "#b5aeaa"],
      ["105,925 160,990 250,1070", 2, "#8fa9ac"],
    ],
    marsh: [
      "555,135 640,145 640,180 560,170", "665,40 755,45 735,80 700,130 680,200 650,190 660,110", "705,240 780,220 790,290 720,350 700,430 645,420 700,310",
      "545,300 640,300 620,345 560,340", "840,470 975,455 960,560 830,560", "495,545 550,540 540,610 495,605", "640,500 685,500 690,620 640,620", "20,840 80,850 75,880 20,870",
      "0,895 50,890 70,905 0,920",
    ],
    tertiary: [
      "10,440 60,520 110,600 190,660", "370,150 405,200 405,260", "240,40 225,130 240,215", "1010,40 925,110 920,150",
      "1080,190 1040,280 940,400", "790,210 795,280 740,340 730,390 690,470 640,490 590,560 550,615 520,625", "875,400 850,480 790,545 710,630",
      "230,40 250,70",
    ],
    secondary: [
      "-20,30 60,120 130,210 190,270", "0,250 50,245 140,155 250,175 365,150 490,35", "270,40 255,180 245,240",
      "0,438 100,400 180,350 290,260 520,265 640,235 740,200 790,205 860,165 960,150 1060,190 1100,178", "825,40 770,90 735,150 735,195",
      "790,205 830,290 870,370 940,410 1030,465 1100,480", "520,265 580,350 630,410 720,465 800,550 870,590 915,650",
      "403,260 403,430 440,500 460,570 500,620 560,700 620,690 700,635 750,665 920,655 1060,630 1100,590",
      "110,400 155,500 265,605 170,700 95,860", "155,500 110,525 0,590", "0,370 30,410", "110,400 120,375 150,355",
    ],
    primary: ["0,150 60,100 120,60 150,38"],
    motorway: [],
    junctions: ["100,36 195,36 195,50 160,58 125,50"],
    rail: ["0,415 60,385 100,355 150,310 220,265 300,240 400,237 560,230 620,222 700,200 780,150 950,36"],
    borders: ["-70,955 60,1080 240,1250 440,1130 640,995 480,825 290,635 400,590 480,605 510,640 560,712 640,820", "640,770 700,710 750,680 850,665 940,672 982,690 988,755 1095,745"],
    blocks: ["236,183 246,192"],
    labels: [
      ["Bridgeport Ave.", -100, 490, 78, 415], ["Meadowside Rd.", -75, 625, 110, 535], ["W Main St.", 38, 250, 135, 165],
      ["N St.", 262, 118, 270, 65], ["Boston Post Rd.", -20, 180, 122, 62], ["Gulf St.", 402, 325, 404, 412], ["Gulf St.", 500, 618, 545, 692],
      ["Old Gate", 755, 122, 822, 42], ["New Haven Ave.", 862, 160, 1056, 185], ["Pond Point Ave.", 832, 285, 948, 420],
      ["Buckingham Ave.", 688, 455, 855, 585], ["Melba St.", 940, 638, 1052, 625], ["E Broadway", 110, 838, 172, 702],
    ],
    texts: [
      ["Milford", 256, 284, "town"], ["Clark Hill", 981, 274, "hill"], ["48 m", 981, 314, "hill"], ["Knobb", 608, 720, "hill"], ["Hill", 608, 760, "hill"],
      ["15 m", 608, 801, "hill"], ["Silver Sands", -15, 886, "park"], ["State Park", -15, 926, "park"],
    ],
    waterLabels: [["Indian River", 495, 545, 600, 400], ["New Haven County", 312, 1172, 570, 1005, "#7d9b90"]],
    shields: [],
    peaks: [[1067, 137], [979, 240], [810, 398], [1067, 524], [606, 685]],
  },
];

const TEXT = {
  hill: { fill: "#9a6a55", size: 37 },
  park: { fill: "#2f8f4e", size: 35.5, style: "italic" },
  exit: { fill: "#3a55c8", size: 34, style: "italic" },
  town: { fill: "#333", size: 43 },
};

const at = (s) => `translate(${s.x} 320) scale(.33333)`;

function Layer({ k, draw }) {
  return SECTIONS.map((s) => (
    <g key={s.x} transform={at(s)}>
      {(s[k] || []).map((v, i) => (
        <React.Fragment key={i}>{draw(v)}</React.Fragment>
      ))}
    </g>
  ));
}

const road = (stroke, w, extra) => (d) => <path d={curve(d)} stroke={stroke} strokeWidth={w} {...extra} />;

function AngledLabel({ v, fill, size }) {
  const [t, x1, y1, x2, y2, c] = v;
  const len = Math.hypot(x2 - x1, y2 - y1);
  const ang = (Math.atan2(y2 - y1, x2 - x1) * 180) / Math.PI;
  return (
    <text transform={`translate(${x1} ${y1}) rotate(${ang})`} y={size * 0.34} fontSize={size} textLength={len} lengthAdjust="spacingAndGlyphs" fill={c || fill}>
      {t}
    </text>
  );
}

function StreetMap() {
  return (
    <svg viewBox="54 333 1791 453" className="block h-full w-full" fontFamily="'Noto Sans', 'Open Sans', sans-serif">
      <defs>
        <pattern id="marsh" width="54" height="44" patternUnits="userSpaceOnUse">
          <path d="M3 6h24M32 17h18M10 28h22M36 39h16" stroke="#4aa0f0" strokeWidth="3.6" />
        </pattern>
        <linearGradient id="pin" x1="0" x2="0" y1="0" y2="1">
          <stop offset="0" stopColor="#3a87bf" />
          <stop offset="1" stopColor="#1673cc" />
        </linearGradient>
      </defs>
      <rect x="54" y="333" width="1791" height="453" fill={FILL.land} />
      <g fill="none" strokeLinecap="round">
        <Layer k="grids" draw={(v) => <path d={lattice(v)} stroke="#c9c7c4" strokeWidth="8" />} />
        <Layer k="grids" draw={(v) => <path d={lattice(v)} stroke="#fff" strokeWidth="5" />} />
      </g>
      <Layer k="areas" draw={([t, p]) => <polygon points={p} fill={FILL[t]} stroke={FILL[t]} strokeWidth="4" strokeLinejoin="round" />} />
      <Layer k="marsh" draw={(p) => <polygon points={p} fill="url(#marsh)" />} />
      <g fill="none" strokeLinecap="round" strokeLinejoin="round">
        <Layer k="streams" draw={([d, w, c]) => <path d={curve(d)} stroke={c || "#9ccbdb"} strokeWidth={w} />} />
        <Layer k="tertiary" draw={road("#b0b47a", 14.5)} />
        <Layer k="secondary" draw={road("#deb07a", 19)} />
        <Layer k="tertiary" draw={road("#f4f8b5", 9)} />
        <Layer k="secondary" draw={road("#fbd5a3", 15)} />
        <Layer k="borders" draw={(d) => <path d={`M${d.split(" ").join("L")}`} stroke="#7d9890" strokeWidth="4.5" strokeDasharray="18 8 5 8" strokeLinecap="butt" />} />
        <Layer k="primary" draw={road("#e68ba0", 20)} />
        <Layer k="rail" draw={road("#737373", 12, { strokeLinecap: "butt" })} />
        <Layer k="rail" draw={road("#d4d4d4", 4, { strokeDasharray: "24 24", strokeLinecap: "butt" })} />
        <Layer k="junctions" draw={(p) => <polygon points={p} fill="#e97d54" stroke="#e0704a" strokeWidth="3" />} />
        <Layer k="motorway" draw={road("#dc6a43", 31)} />
        <Layer k="motorway" draw={road("#ea7f56", 27)} />
        <Layer k="motorway" draw={road("#f8cf52", 7, { strokeDasharray: "52 7", strokeLinecap: "butt" })} />
        <Layer k="blocks" draw={road("#3c3c3c", 6)} />
      </g>
      <g stroke="#fff" strokeOpacity=".6" strokeWidth="6" paintOrder="stroke" strokeLinejoin="round">
        <Layer k="waterLabels" draw={(v) => <AngledLabel v={v} fill="#4a94b0" size={32} />} />
        <Layer
          k="texts"
          draw={([t, x, y, k, anchor]) => (
            <text x={x} y={y + TEXT[k].size * 0.35} fontSize={TEXT[k].size} fill={TEXT[k].fill} fontStyle={TEXT[k].style} fontWeight={k === "exit" ? 500 : 400} textAnchor={anchor || "middle"}>
              {t}
            </text>
          )}
        />
      </g>
      <g fontWeight="500">
        <Layer k="labels" draw={(v) => <AngledLabel v={v} fill="#44301c" size={31} />} />
      </g>
      <Layer k="peaks" draw={([x, y]) => <path d={`M${x} ${y - 12}l13 22h-26z`} fill="#d08f55" />} />
      <Layer
        k="shields"
        draw={([t, x, y, w, h, k]) => (
          <g>
            <rect x={x} y={y} width={w} height={h} rx="7" fill={k === "us" ? "#efc900" : "#fff"} stroke={k === "us" ? "#7a6500" : "#6b6b6b"} strokeWidth="5" />
            <text x={t[0] === "'" ? x + 68 : x + w / 2} y={y + h / 2 + 12.5} fontSize="36" textAnchor="middle" fill={k === "us" ? "#4b4000" : "#444"}>
              {t}
            </text>
          </g>
        )}
      />
      <path d="M248 741.700H275a2.300 2.300 0 0 1 2.300 2.300V758a2.300 2.300 0 0 1-2.300 2.300H248Z" fill="#efc900" />
      <path d="M248 741.700H275a2.300 2.300 0 0 1 2.300 2.300V758a2.300 2.300 0 0 1-2.300 2.300H248" fill="none" stroke="#7a6500" strokeWidth="1.700" />
      <text x="248.500" y="755.500" fontSize="12" fill="#4b4000">T 58</text>
      <path d="M712 461Q734 457 756 461V491Q734 495 712 491Z" fill="#375fb3" stroke="#1a3a94" strokeWidth="1.5" />
      <g fill="#fff" fontSize="12" fontWeight="600" textAnchor="middle">
        <text x="734.5" y="474">CT 8</text>
        <text x="734.5" y="487.5">CT 25</text>
      </g>
      <path d="M949 558l9-19q14-9 20-3q0 9-14 15z" fill="#000" opacity=".16" />
      <path d="M948.5 559C946.500 549 934.300 538 934.300 528A14.200 14.200 0 0 1 962.700 528C962.700 538 950.500 549 948.500 559Z" fill="url(#pin)" stroke="#2c6da3" strokeWidth="1" />
      <circle cx="948.500" cy="528.500" r="5" fill="#fff" stroke="#2b6ea8" strokeWidth=".8" />
    </svg>
  );
}

/* ---------- Page ---------- */

function PersonOutlineIcon({ className }) {
  return (
    <svg viewBox="0 0 24 24" className={className} fill="currentColor">
      <path d="M12 5.900c1.160 0 2.100.940 2.100 2.100s-.940 2.100-2.100 2.100S9.900 9.160 9.900 8s.940-2.100 2.100-2.100m0 9c2.970 0 6.100 1.460 6.100 2.100v1.100H5.900V17c0-.640 3.130-2.100 6.100-2.100M12 4C9.790 4 8 5.790 8 8s1.790 4 4 4 4-1.790 4-4-1.790-4-4-4m0 9c-2.670 0-8 1.340-8 4v3h16v-3c0-2.660-5.330-4-8-4" />
    </svg>
  );
}

function NavItem({ icon: Icon, label, className }) {
  return (
    <li className={`flex flex-col items-center ${className}`}>
      <Icon className="h-10 w-10" />
      <span className="mt-[3px] text-[15.4px] font-semibold leading-6 tracking-[0.2px]">{label}</span>
    </li>
  );
}

export default function App() {
  return (
    <div className="flex h-[1080px] w-[1920px] overflow-hidden bg-[#f2f4f8] font-['Montserrat','Inter',sans-serif] text-black">
      <div className="flex w-[1899px] flex-col">
        <main className="relative flex h-[984px] flex-col px-[54px] pt-[42px]">
          <button className="absolute right-[95px] top-8 flex h-[55px] w-[54px] items-center justify-center rounded-full bg-white pr-[2px]">
            <MdShare className="h-[26.400px] w-[26.400px]" />
          </button>
          <h1 className="h-[34px] whitespace-nowrap text-[26.4px] font-semibold leading-[34px] tracking-[0.43px]">Mitthun house - $2,000</h1>
          <p className="mt-[8px] h-6 text-[17.6px] font-semibold leading-6 tracking-[0.33px]">Moun Dhanuk Toli Chapra</p>
          <div className="mt-[17px] flex h-[27px] gap-[18px] text-[14.5px] font-semibold leading-[26px] text-white">
            <span className="w-[83px] rounded-full bg-[#00cc66] text-center">For Rent</span>
            <span className="w-[124px] rounded-full bg-black text-center">$500 discount</span>
          </div>
          <ul className="mt-[12px] text-[17.6px] font-medium leading-[28.600px] tracking-[0.3px] text-[#2d2d2d]">
            <li>2 Bedrooms</li>
            <li>2 Bathrooms</li>
            <li>Parking Spot</li>
          </ul>
          <h2 className="mt-[32px] h-[30px] text-[22px] font-semibold leading-[30px] tracking-[0.4px]">Location</h2>
          <section className="relative mt-[21px] h-[453px] w-[1791px] shrink-0 overflow-hidden">
            <StreetMap />
            <div className="absolute left-[13px] top-[11px] flex h-[71px] w-[37px] flex-col rounded-[5px] border-2 border-black/20 bg-white bg-clip-padding">
              <button aria-label="Zoom in" className="flex h-[35px] items-center justify-center border-b border-[#ccc] pr-px pt-[2px]">
                <svg viewBox="0 0 14 14" className="h-3.5 w-3.5" stroke="#000" strokeWidth="2.400"><path d="M0 7h14M7 0.500v13" /></svg>
              </button>
              <button aria-label="Zoom out" className="flex flex-1 items-center justify-center pr-px pt-px">
                <svg viewBox="0 0 14 14" className="h-3.5 w-3.5" stroke="#000" strokeWidth="2"><path d="M0 8h14" /></svg>
              </button>
            </div>
            <div className="absolute bottom-0 right-0 h-[76px] w-[112px] bg-white/80 pl-1.5 font-['Liberation_Sans',Arial,sans-serif] text-[14.2px] leading-[19px] text-[#333]">
              <div className="text-[#0078a8]">Leaflet</div>
              <div>| ©</div>
              <div className="text-[#0078a8]">OpenStreetMap</div>
              <div>contributors</div>
            </div>
          </section>
          <button className="mx-auto mt-[54px] h-[59px] w-[1433px] shrink-0 rounded-[18px] bg-[#00cc66] pt-[2px] text-[22px] font-semibold tracking-[0.38px] text-white">Contact Landlord</button>
        </main>
        <nav className="h-24 bg-white pt-[15px] text-[#8f8f8f]">
          <ul className="flex">
            <NavItem icon={MdOutlineExplore} label="Explore" className="ml-[364px] w-[200px]" />
            <NavItem icon={MdOutlineLocalOffer} label="Offers" className="ml-[289px] w-[200px]" />
            <NavItem icon={PersonOutlineIcon} label="Porfile" className="ml-[285px] w-[200px]" />
          </ul>
        </nav>
      </div>
      <div className="flex w-[21px] flex-col bg-[#f0f0f0]">
        <svg viewBox="0 0 21 21" className="h-[21px] w-[21px]" fill="none" stroke="#5c5c5c" strokeWidth="2.600"><path d="M6 12.500l4.500-4.500l4.500 4.500" /></svg>
        <div className="mt-80 h-[718px] bg-[#cdcdcd]" />
        <svg viewBox="0 0 21 21" className="h-[21px] w-[21px]" fill="none" stroke="#5c5c5c" strokeWidth="2.600"><path d="M6 8l4.500 4.500l4.500-4.500" /></svg>
      </div>
    </div>
  );
}
